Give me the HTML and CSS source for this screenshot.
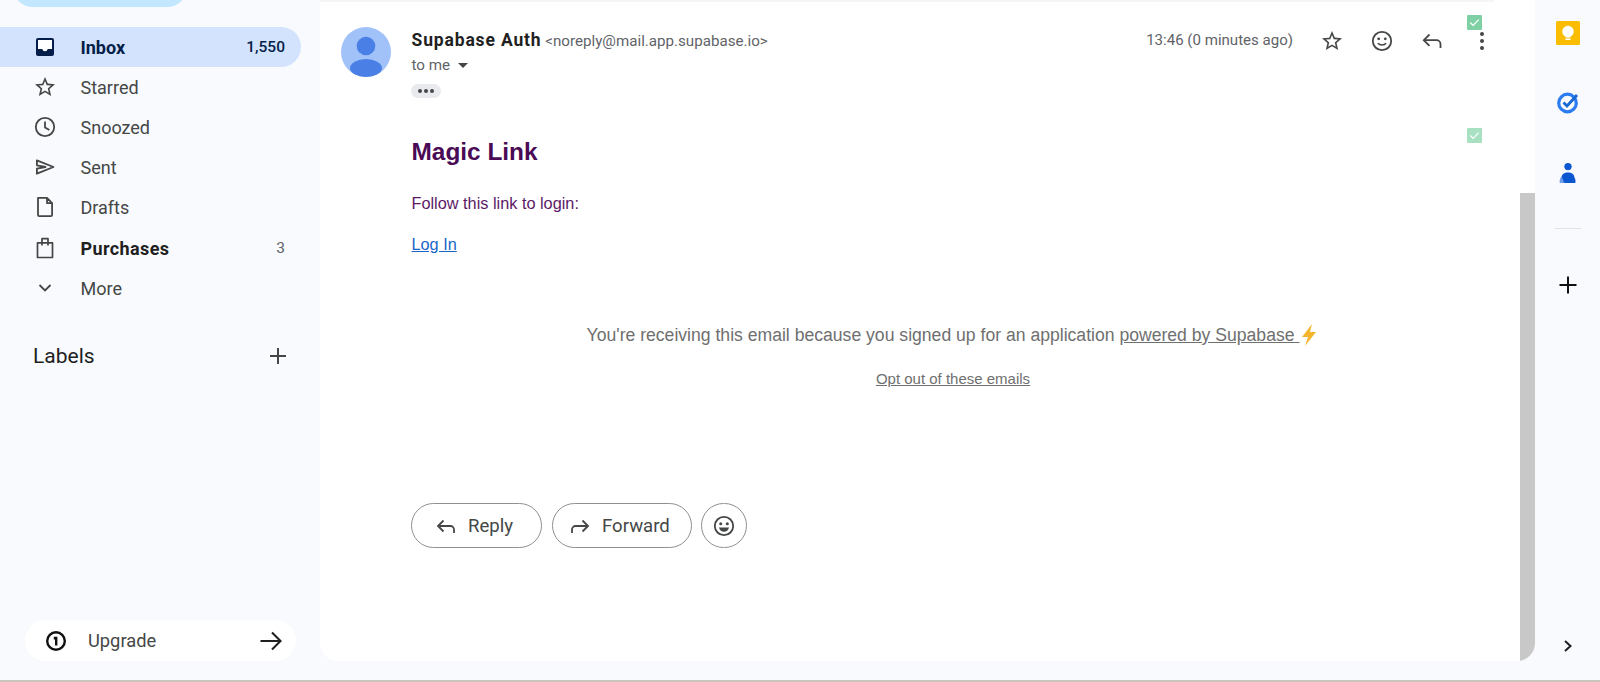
FILE: index.html
```html
<!DOCTYPE html>
<html lang="en">
<head>
<meta charset="utf-8">
<title>Magic Link - Gmail</title>
<link rel="stylesheet" href="styles.css">
</head>
<body>
<div class="app">
  <aside class="sidebar">
    <div class="compose"></div>
    <nav class="nav">
      <a class="nav-row active">
        <svg class="ico" viewBox="0 0 24 24"><path fill="#041e49" d="M5 3h14a2 2 0 0 1 2 2v14a2 2 0 0 1-2 2H5a2 2 0 0 1-2-2V5a2 2 0 0 1 2-2z"/><path fill="#fff" d="M5 5h14v9h-4.200a2.900 2.900 0 0 1-2.800 2.200A2.900 2.900 0 0 1 9.200 14H5z"/></svg>
        <span class="nav-label">Inbox</span><span class="nav-count">1,550</span>
      </a>
      <a class="nav-row">
        <svg class="ico" viewBox="0 0 24 24"><path fill="#444746" d="M22 9.240l-7.190-.620L12 2 9.190 8.630 2 9.240l5.460 4.730L5.820 21 12 17.270 18.180 21l-1.630-7.030L22 9.240zM12 15.400l-3.760 2.270 1-4.280-3.320-2.880 4.380-.380L12 6.100l1.710 4.040 4.380.380-3.320 2.880 1 4.280L12 15.400z"/></svg>
        <span class="nav-label">Starred</span>
      </a>
      <a class="nav-row">
        <svg class="ico" viewBox="0 0 24 24"><circle cx="12" cy="12" r="9.200" fill="none" stroke="#444746" stroke-width="1.800"/><path fill="none" stroke="#444746" stroke-width="1.800" d="M12 6.500V12.400l4.400 2.700"/></svg>
        <span class="nav-label">Snoozed</span>
      </a>
      <a class="nav-row">
        <svg class="ico" viewBox="0 0 24 24"><path fill="none" stroke="#444746" stroke-width="1.800" stroke-linejoin="round" d="M3.900 5.300L20.500 12 3.900 18.700v-5L12.500 12 3.900 10.300z"/></svg>
        <span class="nav-label">Sent</span>
      </a>
      <a class="nav-row">
        <svg class="ico" viewBox="0 0 24 24"><path fill="none" stroke="#444746" stroke-width="1.800" stroke-linejoin="round" d="M5 2.900h9l5.100 5.200V20a1.200 1.200 0 0 1-1.200 1.200H6.200A1.200 1.200 0 0 1 5 20zM14 2.900v5.200h5.100"/></svg>
        <span class="nav-label">Drafts</span>
      </a>
      <a class="nav-row strong">
        <svg class="ico" viewBox="0 0 24 24"><path fill="none" stroke="#444746" stroke-width="1.700" stroke-linejoin="round" d="M4.500 6.800h15v14.700h-15zM9 9.500V2.600h6v6.900"/></svg>
        <span class="nav-label">Purchases</span><span class="nav-count light">3</span>
      </a>
      <a class="nav-row">
        <svg class="ico" viewBox="0 0 24 24"><path fill="none" stroke="#444746" stroke-width="1.800" d="M6.500 9l5.500 5.500L17.500 9"/></svg>
        <span class="nav-label">More</span>
      </a>
    </nav>
    <div class="labels">
      <span>Labels</span>
      <svg class="ico" viewBox="0 0 24 24"><path fill="none" stroke="#444746" stroke-width="2" d="M12 4v16M4 12h16"/></svg>
    </div>
    <div class="upgrade">
      <svg class="up-ico" viewBox="0 0 24 24"><circle cx="12" cy="12" r="8.800" fill="none" stroke="#111" stroke-width="2.400"/><path fill="#111" d="M9.800 7.800h3.600v8.600h-2.400v-6h-1.200z"/></svg>
      <span class="up-label">Upgrade</span>
      <svg class="up-arrow" viewBox="0 0 24 24"><path fill="none" stroke="#1f1f1f" stroke-width="2.100" d="M1.500 12h20M13 3.500l8.500 8.500-8.500 8.500"/></svg>
    </div>
  </aside>

  <main class="panel">
    <div class="mail">
      <div class="topline"></div>
      <header class="mail-head">
        <div class="avatar">
          <svg viewBox="0 0 50 50"><circle cx="25" cy="25" r="25" fill="#a0c2f9"/><circle cx="25" cy="19" r="9.300" fill="#4a7fe6"/><ellipse cx="25" cy="41" rx="16" ry="9" fill="#4a7fe6"/></svg>
        </div>
        <div class="sender">
          <div class="from"><strong>Supabase Auth</strong> <span>&lt;noreply@mail.app.supabase.io&gt;</span></div>
          <div class="tome">to me <i class="caret"></i></div>
          <div class="dots-pill"><i></i><i></i><i></i></div>
        </div>
        <div class="time">13:46 (0 minutes ago)</div>
        <div class="head-icons">
          <svg class="ico" viewBox="0 0 24 24"><path fill="#444746" d="M22 9.240l-7.190-.620L12 2 9.190 8.630 2 9.240l5.460 4.730L5.820 21 12 17.270 18.180 21l-1.630-7.030L22 9.240zM12 15.400l-3.760 2.270 1-4.280-3.320-2.880 4.380-.380L12 6.100l1.710 4.040 4.380.380-3.320 2.880 1 4.280L12 15.400z"/></svg>
          <svg class="ico" viewBox="0 0 24 24"><circle cx="12" cy="12" r="9.200" fill="none" stroke="#444746" stroke-width="1.800"/><circle cx="8.700" cy="9.800" r="1.400" fill="#444746"/><circle cx="15.300" cy="9.800" r="1.400" fill="#444746"/><path fill="none" stroke="#444746" stroke-width="1.600" d="M7.800 14.300c2.300 2.300 6.100 2.300 8.400 0"/></svg>
          <svg class="ico" viewBox="0 0 24 24"><path fill="none" stroke="#444746" stroke-width="1.800" d="M9.500 5.500L3.800 11.200l5.700 5.600M3.800 11.200h12.700a4 4 0 0 1 4 4V19"/></svg>
          <svg class="ico" viewBox="0 0 24 24"><g fill="#444746"><circle cx="12" cy="5" r="2"/><circle cx="12" cy="12" r="2"/><circle cx="12" cy="19" r="2"/></g></svg>
        </div>
        <span class="check top"><svg viewBox="0 0 16 16"><path fill="none" stroke="#fff" stroke-width="1.300" d="M3.500 8l3 3 6-6"/></svg></span>
        <span class="check lower"><svg viewBox="0 0 16 16"><path fill="none" stroke="#fff" stroke-width="1.300" d="M3.500 8l3 3 6-6"/></svg></span>
      </header>

      <section class="body">
        <h1>Magic Link</h1>
        <p class="follow">Follow this link to login:</p>
        <p class="login"><a>Log In</a></p>
      </section>

      <section class="foot">
        <p class="recv">You're receiving this email because you signed up for an application <a>powered by Supabase </a><svg class="bolt" viewBox="0 0 16 24"><path fill="#f5b52e" d="M11 1L1 14h6l-3 9 11-14H9z"/></svg></p>
        <p class="opt"><a>Opt out of these emails</a></p>
      </section>

      <div class="actions">
        <button class="btn reply">
          <svg class="ico" viewBox="0 0 24 24"><path fill="none" stroke="#444746" stroke-width="1.800" d="M9.500 6.500L4 12l5.500 5.500M4 12h12.500a3.500 3.500 0 0 1 3.500 3.500V19"/></svg>
          <span>Reply</span>
        </button>
        <button class="btn forward">
          <svg class="ico" viewBox="0 0 24 24"><path fill="none" stroke="#444746" stroke-width="1.800" d="M14.500 6.500L20 12l-5.500 5.500M20 12H7.500A3.500 3.500 0 0 0 4 15.500V19"/></svg>
          <span>Forward</span>
        </button>
        <button class="btn round">
          <svg class="ico" viewBox="0 0 24 24"><circle cx="12" cy="12" r="9.200" fill="none" stroke="#444746" stroke-width="1.800"/><circle cx="8.700" cy="9.800" r="1.500" fill="#444746"/><circle cx="15.300" cy="9.800" r="1.500" fill="#444746"/><path fill="#444746" d="M7 13.500h10c-.6 2.800-2.600 4.300-5 4.300s-4.400-1.500-5-4.300z"/></svg>
        </button>
      </div>
    </div>
    <div class="scroll"><div class="thumb"></div></div>
  </main>

  <aside class="rail">
    <div class="rail-top">
      <svg class="rail-ico keep" viewBox="0 0 24 24"><rect width="24" height="24" rx="1.500" fill="#fbbc04"/><circle cx="12" cy="10.500" r="5.700" fill="#fff"/><rect x="9.500" y="15" width="5" height="1.500" fill="#fff"/><rect x="9.500" y="17.500" width="5" height="1.500" fill="#fff"/></svg>
      <svg class="rail-ico tasks" viewBox="0 0 24 24"><circle cx="11.500" cy="13" r="8.800" fill="none" stroke="#2b7cf0" stroke-width="3.200"/><path fill="none" stroke="#1967d2" stroke-width="2.800" d="M7.500 12.500l3.500 3.500 10-11"/></svg>
      <svg class="rail-ico contacts" viewBox="0 0 24 24"><circle cx="12" cy="5" r="4" fill="#0b57d0"/><path fill="#0b57d0" d="M5 23v-6c0-3.500 3-5.500 7-5.500s7 2 7 5.500c1 1 1.500 4 1 6z"/><path fill="#6b9bea" d="M5 15.500c-1.500 1.500-2.500 4.500-2 7.500h5z"/></svg>
      <div class="rail-sep"></div>
      <svg class="rail-plus" viewBox="0 0 24 24"><path fill="none" stroke="#111" stroke-width="2" d="M12 3.500v17M3.500 12h17"/></svg>
    </div>
    <svg class="rail-chev" viewBox="0 0 12 14"><path fill="none" stroke="#1f1f1f" stroke-width="2" d="M3 2l5.500 5L3 12"/></svg>
  </aside>
</div>
<div class="baseline"></div>
</body>
</html>
```

FILE: styles.css
```css
* { box-sizing: border-box; }
html, body { margin: 0; height: 682px; overflow: hidden; }
body { background: #f8fafd; font-family: Roboto, "Liberation Sans", sans-serif; color: #1f1f1f; }
svg { display: block; flex: none; }
.ico { width: 24px; height: 24px; }

.app { display: flex; height: 680px; }
.baseline { height: 2px; background: #c9c5bd; }

/* Sidebar */
.sidebar { width: 320px; flex: none; display: flex; flex-direction: column; height: 680px; overflow: hidden; }
.compose { width: 174px; height: 40px; margin: -33px 0 0 13px; background: #c2e7ff; border-radius: 20px; flex: none; }
.nav { margin-top: 20px; display: flex; flex-direction: column; }
.nav-row { width: 301px; height: 40px; padding: 0 16px 0 33px; display: flex; align-items: center; color: #444746; font-size: 18px; border-radius: 0 20px 20px 0; }
.nav-label { margin-left: 23.500px; flex: 1; }
.nav-count { font-size: 15.500px; font-weight: 500; }
.nav-count.light { font-weight: 400; color: #5f6368; }
.active { background: #d3e3fd; color: #041e49; font-weight: 700; }
.strong { color: #1f1f1f; font-weight: 700; margin-top: 1px; }
.strong .nav-label { letter-spacing: 0.4px; }

.labels { margin-top: 36px; width: 301px; padding: 0 11px 0 33px; display: flex; justify-content: space-between; align-items: center; font-size: 21px; color: #1f1f1f; }

.upgrade { margin: auto 0 19px 25px; width: 271px; height: 41px; padding: 0 13px 0 19px; background: #fff; border-radius: 21px; display: flex; align-items: center; }
.up-ico { width: 24px; height: 24px; }
.up-label { margin-left: 20px; flex: 1; font-size: 18.300px; color: #444746; }
.up-arrow { width: 24px; height: 24px; }

/* Message panel */
.panel { width: 1215px; flex: none; height: 661px; background: #fff; border-radius: 0 0 18px 18px; display: flex; overflow: hidden; }
.mail { flex: 1; position: relative; display: flex; flex-direction: column; }
.topline { height: 2px; width: 1174px; background: #f5f5f5; }

.mail-head { display: flex; padding: 26px 26px 0 21px; height: 102px; position: relative; }
.avatar { margin-top: -1px; }
.avatar svg { width: 50px; height: 50px; }
.sender { flex: 1; margin-left: 20.500px; }
.from { height: 25px; line-height: 25px; font-size: 15.150px; color: #5f6368; white-space: nowrap; }
.from strong { font-size: 17.500px; letter-spacing: 0.85px; font-weight: 700; color: #1f1f1f; }
.tome { height: 25px; line-height: 25px; font-size: 15.200px; color: #5f6368; display: flex; align-items: center; }
.caret { margin-left: 8px; width: 0; height: 0; border: 5px solid transparent; border-top-color: #444746; border-bottom: 0; }
.dots-pill { margin-top: 6px; margin-left: -0.500px; width: 30px; height: 14px; background: #e8eaed; border-radius: 7px; display: flex; justify-content: center; align-items: center; gap: 2px; }
.dots-pill i { width: 4px; height: 4px; border-radius: 50%; background: #444746; }

.time { font-size: 15.050px; line-height: 25px; color: #5f6368; white-space: nowrap; }
.head-icons { margin-left: 27px; display: flex; gap: 26px; margin-top: 1px; height: 24px; }

.check { position: absolute; right: 38px; width: 15px; height: 15px; border-radius: 1px; background: #7fd1a5; }
.check.top { top: 13px; }
.check.lower { top: 126px; background: #a8e0c2; }

.body { padding-left: 91.500px; }
h1 { margin: 28px 0 0; font: 700 24.400px/40px "Liberation Sans", Arial, sans-serif; color: #4a0a55; }
.follow { margin: 19px 0 0; font: 16.300px/24px "Liberation Sans", Arial, sans-serif; color: #5c1a66; }
.login { margin: 17px 0 0; font: 16.300px/24px "Liberation Sans", Arial, sans-serif; }
.login a { color: #1a66c9; text-decoration: underline; }

.foot { margin-top: 67px; padding-left: 66px; text-align: center; font-family: "Liberation Sans", Arial, sans-serif; color: #6f6f6f; }
.recv { margin: 0; height: 24px; line-height: 24px; font-size: 17.600px; display: flex; justify-content: center; align-items: center; white-space: pre; }
.recv a { text-decoration: underline; }
.bolt { width: 20px; height: 24px; }
.opt { margin: 22px 0 0; line-height: 20px; font-size: 15px; }
.opt a { text-decoration: underline; }

.actions { margin-top: 114px; margin-left: 91px; display: flex; gap: 10px; }
.btn { height: 45px; border: 1px solid #8e918f; border-radius: 23px; background: #fff; display: flex; align-items: center; font-family: Roboto, sans-serif; font-size: 18.600px; color: #444746; padding: 0; }
.btn span { margin-left: 10px; }
.reply { width: 131px; padding-left: 22px; }
.forward { width: 140px; padding-left: 15px; }
.round { width: 46px; justify-content: center; margin-left: -1px; }

.scroll { width: 15px; flex: none; padding-top: 193px; }
.thumb { height: 468px; background: #c8c8c8; }

/* Right rail */
.rail { width: 65px; flex: none; display: flex; flex-direction: column; align-items: center; height: 680px; padding-left: 1px; }
.rail-top { display: flex; flex-direction: column; align-items: center; padding-top: 20px; flex: 1; }
.rail-ico { width: 24px; height: 24px; }
.keep { margin-top: 1px; }
.tasks { margin-top: 45px; }
.contacts { margin-top: 47px; width: 22px; }
.rail-sep { margin-top: 43px; width: 26px; height: 1px; background: #e3e3e3; }
.rail-plus { margin-top: 44px; width: 24px; height: 24px; }
.rail-chev { width: 12px; height: 14px; margin-bottom: 27px; }
```
